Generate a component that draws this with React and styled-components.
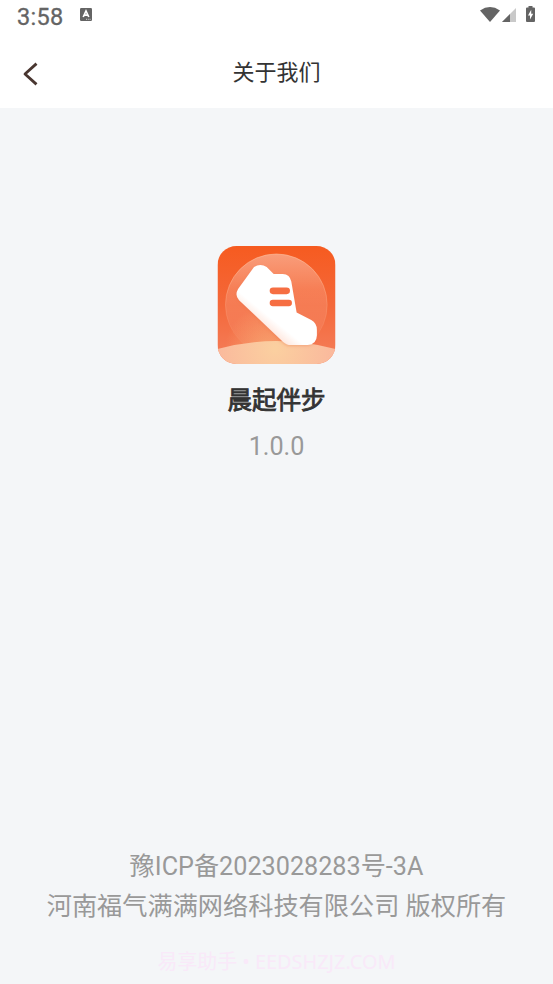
import React from 'react';
import styled, { createGlobalStyle } from 'styled-components';

const FONT = 'Roboto, "Noto Sans CJK SC", sans-serif';
const FG_TITLE = '#333333';
const FG_MUTED = '#999999';
const FG_STATUS = '#646464';
const BG_PAGE = '#f4f6f8';

const GlobalStyle = createGlobalStyle`
  body {
    margin: 0;
    font-family: ${FONT};
    background: ${BG_PAGE};
  }
`;

const Screen = styled.div`
  display: flex;
  flex-direction: column;
  height: 984px;
  overflow: hidden;
  background: ${BG_PAGE};
`;

const StatusBar = styled.div`
  display: flex;
  align-items: center;
  height: 34px;
  padding: 0 18px 0 17px;
  background: #fff;
`;

const Time = styled.span`
  width: 63px;
  font-size: 23.5px;
  line-height: 34px;
  letter-spacing: 0.3px;
  color: ${FG_STATUS};
  -webkit-text-stroke: 0.3px ${FG_STATUS};
`;

const StatusIcon = styled.svg`
  display: block;
  flex: none;
  margin-left: ${props => props.$gap || 0}px;
  margin-bottom: ${props => props.$lift || 5}px;
`;

const Spacer = styled.div`
  flex: 1;
`;

const NavBar = styled.header`
  display: grid;
  grid-template-columns: 60px 1fr 60px;
  align-items: center;
  height: 74px;
  background: #fff;
`;

const BackButton = styled.button`
  display: flex;
  padding: 5px 0 0 22px;
  border: none;
  background: none;
`;

const Title = styled.h1`
  margin: 0;
  padding-top: 4px;
  font-size: 22px;
  line-height: 32px;
  font-weight: 400;
  text-align: center;
  color: ${FG_TITLE};
`;

const Content = styled.main`
  flex: 1;
  display: flex;
  flex-direction: column;
  align-items: center;
  padding-top: 138px;
`;

const Logo = styled.svg`
  display: block;
  width: 119px;
  height: 118px;
`;

const AppName = styled.h2`
  margin: 19px 0 0;
  font-size: 24.5px;
  line-height: 36px;
  font-weight: 400;
  color: ${FG_TITLE};
  -webkit-text-stroke: 0.8px ${FG_TITLE};
`;

const Version = styled.div`
  margin-top: 10px;
  font-size: 25.2px;
  line-height: 36px;
  color: ${FG_MUTED};
`;

const Footer = styled.footer`
  display: flex;
  flex-direction: column;
  align-items: center;
  height: 137px;
`;

const FooterLine = styled.div`
  font-size: 25.2px;
  line-height: 40px;
  white-space: nowrap;
  color: ${FG_MUTED};
`;

const SiteMark = styled.div`
  margin-top: 20px;
  font-family: "Noto Sans", "Noto Sans CJK SC", sans-serif;
  font-size: 19.9px;
  line-height: 30px;
  white-space: nowrap;
  color: #f9e9f9;
`;

const ShoeLogo = () => (
    <Logo viewBox="20.5 17 358 355">
        <defs>
            <linearGradient id="back" x1="0" y1="0" x2="0" y2="1">
                <stop offset="0" stopColor="#f65b20" />
                <stop offset="0.5" stopColor="#f4683a" />
                <stop offset="1" stopColor="#f47f5c" />
            </linearGradient>
            <linearGradient id="globe" x1="0.5" y1="0" x2="0.5" y2="1">
                <stop offset="0" stopColor="#fff" stopOpacity="0.4" />
                <stop offset="0.35" stopColor="#fff" stopOpacity="0.17" />
                <stop offset="1" stopColor="#fff" stopOpacity="0" />
            </linearGradient>
            <linearGradient id="rim" x1="0" y1="0" x2="0" y2="1">
                <stop offset="0" stopColor="#ffc9a8" stopOpacity="0.5" />
                <stop offset="0.8" stopColor="#ffc9a8" stopOpacity="0.05" />
            </linearGradient>
            <radialGradient id="glow" gradientUnits="userSpaceOnUse" cx="175" cy="325" r="130">
                <stop offset="0" stopColor="#fab87c" stopOpacity="0.6" />
                <stop offset="1" stopColor="#fab87c" stopOpacity="0" />
            </radialGradient>
            <radialGradient id="ground" gradientUnits="userSpaceOnUse" cx="195" cy="325" r="190">
                <stop offset="0" stopColor="#fbd0a0" />
                <stop offset="1" stopColor="#fab79c" />
            </radialGradient>
            <linearGradient id="shoe" gradientUnits="userSpaceOnUse" x1="148" y1="258" x2="174" y2="226">
                <stop offset="0" stopColor="#ffe3d8" />
                <stop offset="1" stopColor="#fff" />
            </linearGradient>
            <filter id="shadow" x="-20%" y="-20%" width="140%" height="140%">
                <feDropShadow dx="-2" dy="4" stdDeviation="4" floodColor="#e8703c" floodOpacity="0.3" />
            </filter>
            <clipPath id="tile">
                <rect x="22" y="17" width="355" height="355" rx="57" />
            </clipPath>
        </defs>
        <g clipPath="url(#tile)">
            <rect x="22" y="17" width="355" height="355" fill="url(#back)" />
            <circle cx="199" cy="194" r="153" fill="url(#globe)" stroke="url(#rim)" strokeWidth="3" />
            <rect x="22" y="180" width="355" height="192" fill="url(#glow)" />
            <path d="M22 327Q199 279 377 327V372H22Z" fill="url(#ground)" />
            <path
                d="M132 80Q151 68 170 80L191 101H218Q240 102 244 124L260 217L304 240Q321 250 321 269V286Q320 313 293 315H243Q230 315 218 304L87 180Q73 165 84 146Z"
                fill="url(#shoe)"
                filter="url(#shadow)"
            />
            <rect x="179" y="142" width="61" height="20" rx="10" fill="#f66e42" />
            <rect x="179" y="179" width="67" height="19" rx="9.5" fill="#f66e42" />
        </g>
    </Logo>
);

const App = () => (
    <>
        <GlobalStyle />
        <Screen>
            <StatusBar>
                <Time>3:58</Time>
                <StatusIcon width="12" height="13" viewBox="0 0 12 13">
                    <rect width="12" height="13" rx="1.2" fill="#646464" />
                    <path d="M3.2 9L6 3L8.8 9M4.2 7.2H7.8" fill="none" stroke="#fff" strokeWidth="1.7" />
                    <path d="M6 11.3H11" stroke="#ddd" strokeWidth="0.9" strokeDasharray="1 0.8" />
                </StatusIcon>
                <Spacer />
                <StatusIcon width="20" height="15" viewBox="0 0 20 15">
                    <path d="M0 3.4Q10-3.2 20 3.4L10 15Z" fill="#646464" />
                </StatusIcon>
                <StatusIcon $gap={2} $lift={4} width="14" height="14" viewBox="0 0 14 14">
                    <path d="M14 0V14H0Z" fill="#c9c9c9" />
                    <path d="M8 6V14H0Z" fill="#646464" />
                </StatusIcon>
                <StatusIcon $gap={10} $lift={6} width="9" height="16" viewBox="0 0 9 16">
                    <path d="M2.5 0H6.5V1.6H8Q9 1.6 9 2.6V15Q9 16 8 16H1Q0 16 0 15V2.6Q0 1.6 1 1.6H2.5Z" fill="#646464" />
                    <path d="M5.2 3.8L2 9.4H4V13.4L7.2 7.8H5.2Z" fill="#fff" />
                </StatusIcon>
            </StatusBar>
            <NavBar>
                <BackButton aria-label="返回">
                    <svg width="16" height="24" viewBox="0 0 16 24">
                        <path d="M14.5 1.6L3 12L14.5 22.4" fill="none" stroke="#493630" strokeWidth="2.8" strokeLinejoin="round" />
                    </svg>
                </BackButton>
                <Title>关于我们</Title>
            </NavBar>
            <Content>
                <ShoeLogo />
                <AppName>晨起伴步</AppName>
                <Version>1.0.0</Version>
            </Content>
            <Footer>
                <FooterLine>豫ICP备2023028283号-3A</FooterLine>
                <FooterLine>河南福气满满网络科技有限公司 版权所有</FooterLine>
                <SiteMark>易享助手 • EEDSHZJZ.COM</SiteMark>
            </Footer>
        </Screen>
    </>
);

export default App;
